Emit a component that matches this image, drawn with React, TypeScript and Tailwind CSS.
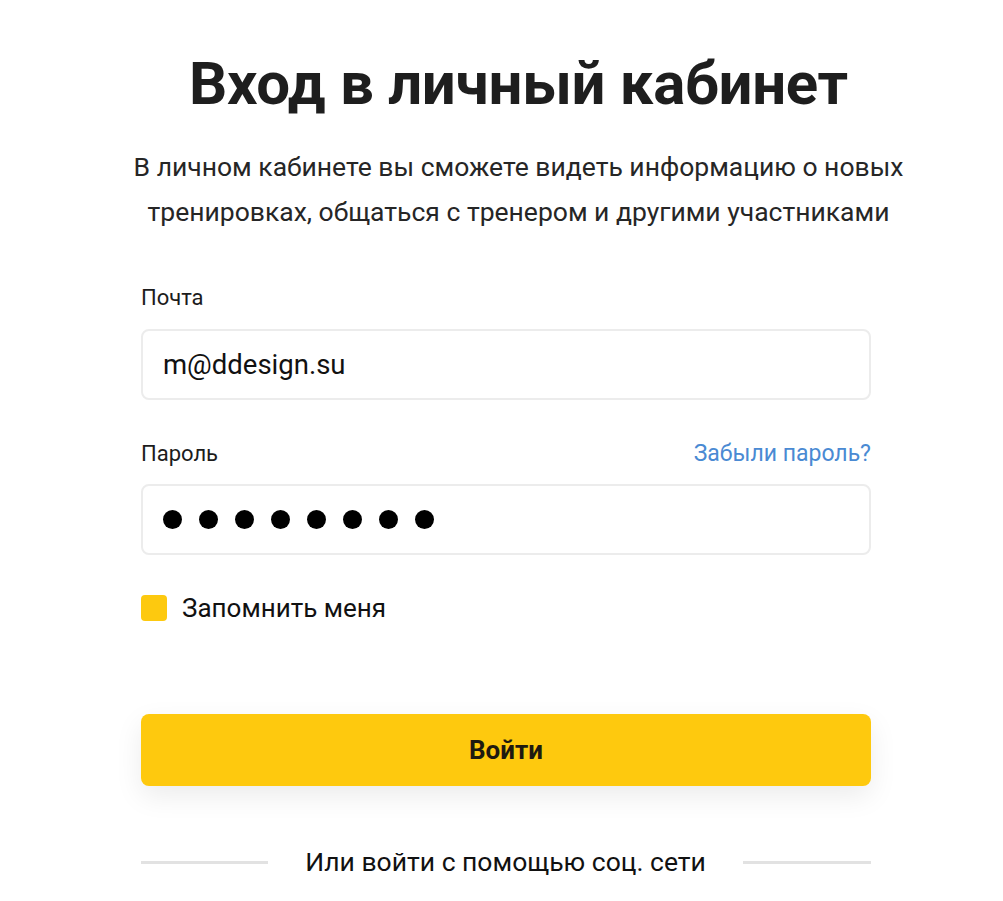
import React from "react";

export default function App() {
  const font = { fontFamily: "Roboto, 'Noto Sans', sans-serif" };
  return (
    <div className="min-h-[901px] w-[1003px] bg-white text-[#1c1c1c]" style={font}>
      <div className="ml-[131px] w-[775px] pt-[46px] text-center">
        <h1 className="text-[60px] font-bold leading-[76px] tracking-[-0.3px] text-[#1e1e1e]">
          Вход в личный кабинет
        </h1>
        <p className="mt-[22px] text-[26.5px] leading-[45px] text-[#262626]">
          В личном кабинете вы сможете видеть информацию о новых тренировках, общаться с тренером и другими участниками
        </p>
      </div>
      <div className="ml-[141px] w-[730px]">
        <div className="mt-[49px] text-[22px] leading-[30px] text-[#1c1c1c]">Почта</div>
        <div className="mt-[16px] flex h-[71px] items-center rounded-[8px] border-2 border-[#ececec] pl-[20px] text-[27.5px] text-[#111]">
          m@ddesign.su
        </div>
        <div className="mt-[39px] flex items-center justify-between text-[22px] leading-[30px]">
          <span>Пароль</span>
          <span className="text-[23px] text-[#4a8ad3]">Забыли пароль?</span>
        </div>
        <div className="mt-[15px] flex h-[71px] items-center gap-[17px] rounded-[8px] border-2 border-[#ececec] pl-[20px]">
          {Array.from({ length: 8 }).map((_, i) => (
            <span key={i} className="block h-[19px] w-[19px] rounded-full bg-black" />
          ))}
        </div>
        <div className="mt-[39px] flex items-center gap-[15px]">
          <span className="block h-[26px] w-[26px] rounded-[4px] bg-[#fdc90f]" />
          <span className="text-[26px] leading-[28px] text-[#111]">Запомнить меня</span>
        </div>
        <button className="mt-[92px] flex h-[72px] w-full items-center justify-center rounded-[8px] bg-[#fec90e] text-[26px] font-bold text-[#1e1a10] shadow-[0_10px_28px_rgba(0,0,0,0.08)]">
          Войти
        </button>
        <div className="mt-[61px] flex items-center justify-between">
          <span className="block h-[3px] w-[127px] bg-[#e2e2e2]" />
          <span className="text-[26.5px] leading-[30px] text-[#111]">Или войти с помощью соц. сети</span>
          <span className="block h-[3px] w-[128px] bg-[#e2e2e2]" />
        </div>
      </div>
    </div>
  );
}
